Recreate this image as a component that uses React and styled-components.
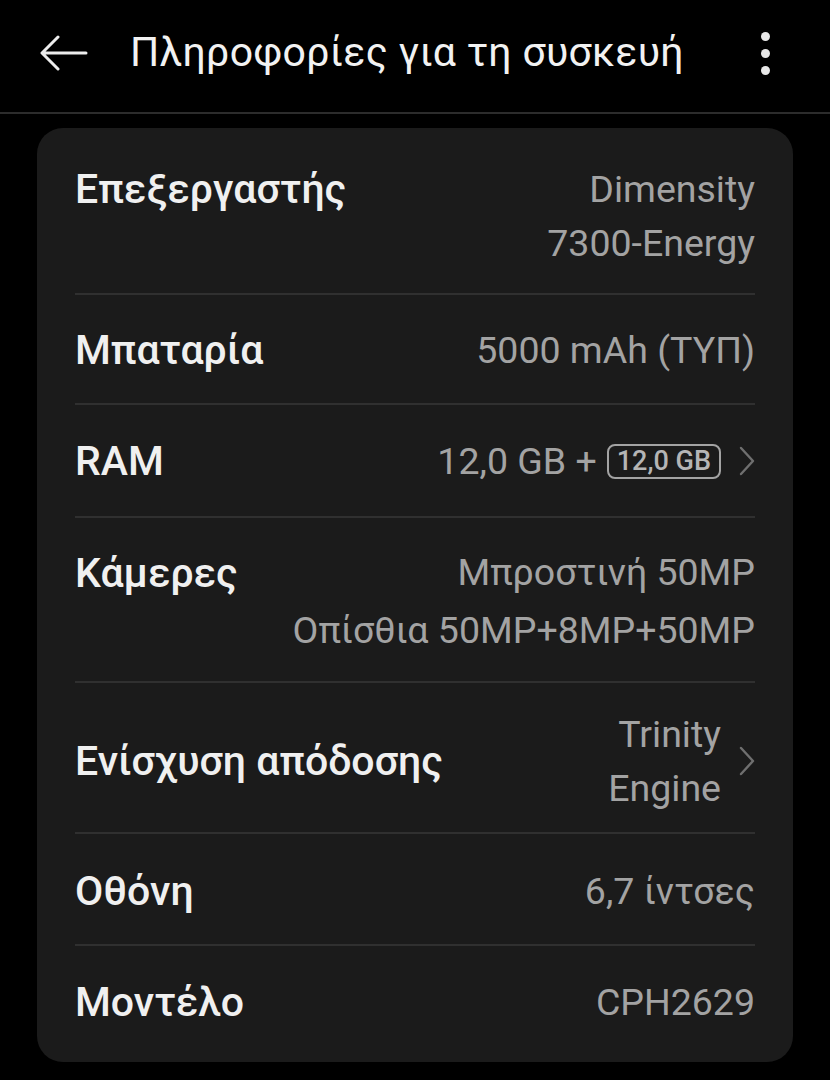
import styled, { createGlobalStyle } from "styled-components";

const GlobalStyle = createGlobalStyle`
  html, body {
    margin: 0;
    padding: 0;
    background: #000;
  }
  body {
    font-family: Roboto, "Noto Sans", sans-serif;
  }
`;

const Page = styled.div`
  width: 830px;
  height: 1080px;
  background: #000;
  overflow: hidden;
`;

const Header = styled.div`
  height: 114px;
  display: flex;
  align-items: center;
  padding: 0 42px 0 40px;
  box-sizing: border-box;
  border-bottom: 2px solid #2c2c2c;
`;

const BackButton = styled.div`
  width: 50px;
  height: 40px;
  display: flex;
  align-items: center;
  margin-right: 40px;
  position: relative;
  top: -3px;
`;

const Title = styled.h1`
  flex: 1;
  margin: 0;
  font-size: 41px;
  font-weight: 400;
  color: #f2f2f2;
  letter-spacing: 0.3px;
  position: relative;
  top: -4px;
`;

const Dots = styled.div`
  display: flex;
  flex-direction: column;
  gap: 8px;
  align-items: center;
  margin-right: 18px;
  position: relative;
  top: -3px;
  span {
    width: 9px;
    height: 9px;
    border-radius: 50%;
    background: #e8e8e8;
  }
`;

const Card = styled.div`
  margin: 14px 37px 0;
  background: #1b1b1b;
  border-radius: 26px;
  padding: 0 38px 4px;
`;

const Row = styled.div`
  display: flex;
  justify-content: space-between;
  align-items: ${(p) => (p.$center ? "center" : "flex-start")};
  padding: ${(p) => p.$top || 28}px 0 ${(p) => p.$bottom || 26}px;
  border-bottom: ${(p) => (p.$last ? "none" : "2px solid #303030")};
`;

const Label = styled.div`
  font-size: 41px;
  font-weight: 500;
  color: #f0f0f0;
  line-height: ${(p) => p.$lh || 54}px;
`;

const ValueWrap = styled.div`
  display: flex;
  align-items: center;
  gap: 18px;
`;

const Value = styled.div`
  font-size: 37.5px;
  color: #a3a3a3;
  line-height: ${(p) => p.$lh || 54}px;
  text-align: right;
  display: flex;
  flex-direction: column;
  align-items: flex-end;
`;

const Inline = styled.div`
  display: flex;
  align-items: center;
  gap: 10px;
`;

const Badge = styled.span`
  border: 2px solid #a3a3a3;
  border-radius: 8px;
  font-size: 27px;
  font-weight: 500;
  line-height: 31px;
  padding: 0 8px;
  color: #b5b5b5;
`;

const Chevron = () => (
  <svg width="16" height="30" viewBox="0 0 16 30">
    <path d="M2 2 L14 15 L2 28" fill="none" stroke="#6f6f6f" strokeWidth="2.4" strokeLinecap="round" strokeLinejoin="round" />
  </svg>
);

export default function App() {
  return (
    <Page>
      <GlobalStyle />
      <Header>
        <BackButton>
          <svg width="48" height="36" viewBox="0 0 48 36">
            <path d="M46 18 H3 M18 2 L2 18 L18 34" fill="none" stroke="#ededed" strokeWidth="3" strokeLinecap="round" strokeLinejoin="round" />
          </svg>
        </BackButton>
        <Title>Πληροφορίες για τη συσκευή</Title>
        <Dots>
          <span />
          <span />
          <span />
        </Dots>
      </Header>
      <Card>
        <Row $top={34} $bottom={23}>
          <Label>Επεξεργαστής</Label>
          <Value>
            <span>Dimensity</span>
            <span>7300-Energy</span>
          </Value>
        </Row>
        <Row>
          <Label>Μπαταρία</Label>
          <Value>5000 mAh (ΤΥΠ)</Value>
        </Row>
        <Row $center $top={29} $bottom={28}>
          <Label>RAM</Label>
          <ValueWrap>
            <Value>
              <Inline>
                12,0 GB + <Badge>12,0 GB</Badge>
              </Inline>
            </Value>
            <Chevron />
          </ValueWrap>
        </Row>
        <Row $top={25} $bottom={22}>
          <Label $lh={60}>Κάμερες</Label>
          <Value $lh={58}>
            <span>Μπροστινή 50MP</span>
            <span>Οπίσθια 50MP+8MP+50MP</span>
          </Value>
        </Row>
        <Row $center $top={24} $bottom={17}>
          <Label>Ενίσχυση απόδοσης</Label>
          <ValueWrap>
            <Value>
              <span>Trinity</span>
              <span>Engine</span>
            </Value>
            <Chevron />
          </ValueWrap>
        </Row>
        <Row $top={30} $bottom={26}>
          <Label>Οθόνη</Label>
          <Value>6,7 ίντσες</Value>
        </Row>
        <Row $last $top={29} $bottom={29}>
          <Label>Μοντέλο</Label>
          <Value>CPH2629</Value>
        </Row>
      </Card>
    </Page>
  );
}
